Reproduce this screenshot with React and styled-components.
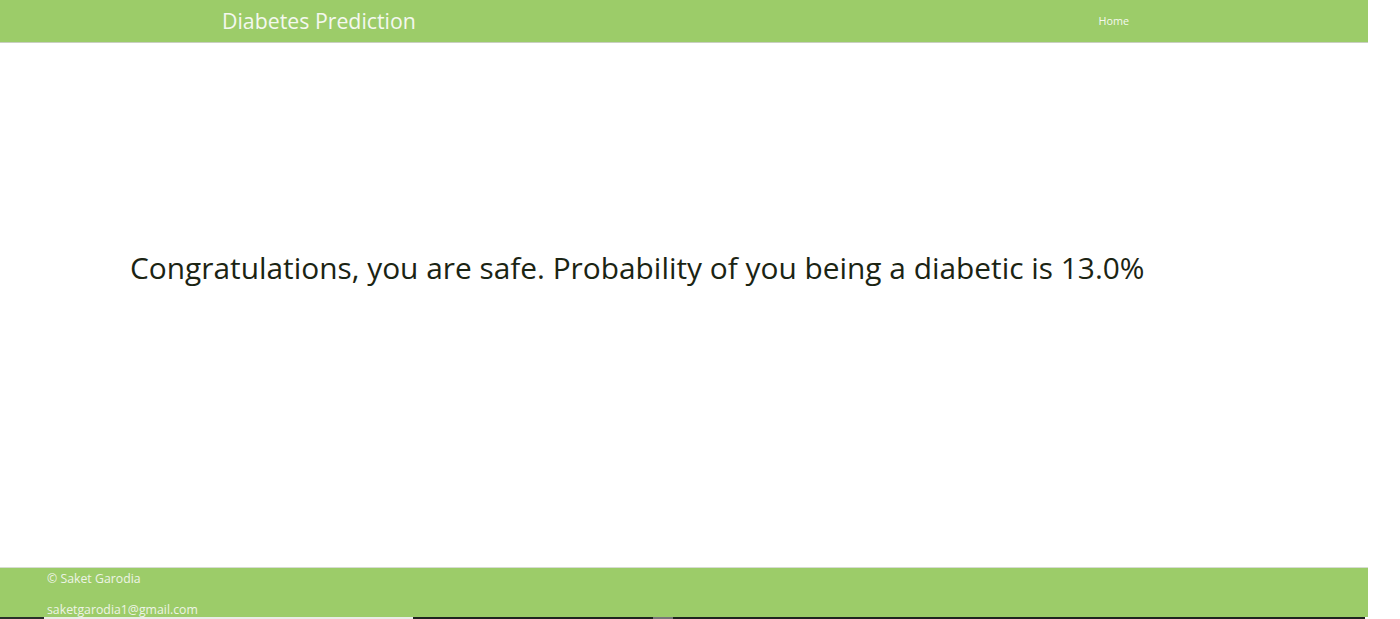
import React from "react";
import styled, { createGlobalStyle } from "styled-components";

const Global = createGlobalStyle`
  html, body { margin: 0; padding: 0; background: #fff; }
  body { font-family: "Open Sans", "Noto Sans", sans-serif; overflow: hidden; }
`;

const Page = styled.div`
  width: 1400px;
  height: 619px;
  display: flex;
  flex-direction: column;
  overflow: hidden;
`;

const Header = styled.header`
  width: 1368px;
  height: 43px;
  flex: none;
  background: #9ccc69;
  border-bottom: 1px solid #c9cfc1;
  display: flex;
  align-items: center;
  box-sizing: border-box;
  padding-left: 222px;
`;

const Brand = styled.div`
  color: #f4f8ef;
  font-size: 21.3px;
  line-height: 1;
`;

const Nav = styled.nav`
  margin-left: auto;
  margin-right: 239px;
  color: #f4f8ef;
  font-size: 10.8px;
  margin-top: -2px;
`;

const Main = styled.main`
  flex: 1;
  display: flex;
  align-items: flex-start;
  padding-left: 130px;
  padding-top: 205px;
`;

const Message = styled.h2`
  margin: 0;
  font-weight: 400;
  font-size: 29.85px;
  line-height: 40px;
  color: #1b2413;
`;

const Footer = styled.footer`
  width: 1368px;
  height: 50px;
  flex: none;
  background: #9ccc69;
  border-top: 1px solid #d7dcd2;
  box-sizing: border-box;
  padding-left: 47px;
  overflow: hidden;
  color: #eef4e6;
  font-size: 12.3px;
`;

const FooterLine = styled.p`
  margin: 0;
  line-height: 14px;
  padding-top: ${(p) => p.$top}px;
`;

const Strip = styled.div`
  height: 2px;
  flex: none;
  display: flex;
`;

const Seg = styled.div`
  width: ${(p) => p.$w}px;
  background: ${(p) => p.$c};
`;

export default function App() {
  return (
    <>
      <Global />
      <Page>
        <Header>
          <Brand>Diabetes Prediction</Brand>
          <Nav>Home</Nav>
        </Header>
        <Main>
          <Message>
            Congratulations, you are safe. Probability of you being a diabetic is 13.0%
          </Message>
        </Main>
        <Footer>
          <FooterLine $top={4}>© Saket Garodia</FooterLine>
          <FooterLine $top={17}>saketgarodia1@gmail.com</FooterLine>
        </Footer>
        <Strip>
          <Seg $w={44} $c="#2a2f2a" />
          <Seg $w={369} $c="#e9ece6" />
          <Seg $w={240} $c="#1f2420" />
          <Seg $w={20} $c="#777" />
          <Seg $w={692} $c="#1f2420" />
          <Seg $w={35} $c="#fff" />
        </Strip>
      </Page>
    </>
  );
}
